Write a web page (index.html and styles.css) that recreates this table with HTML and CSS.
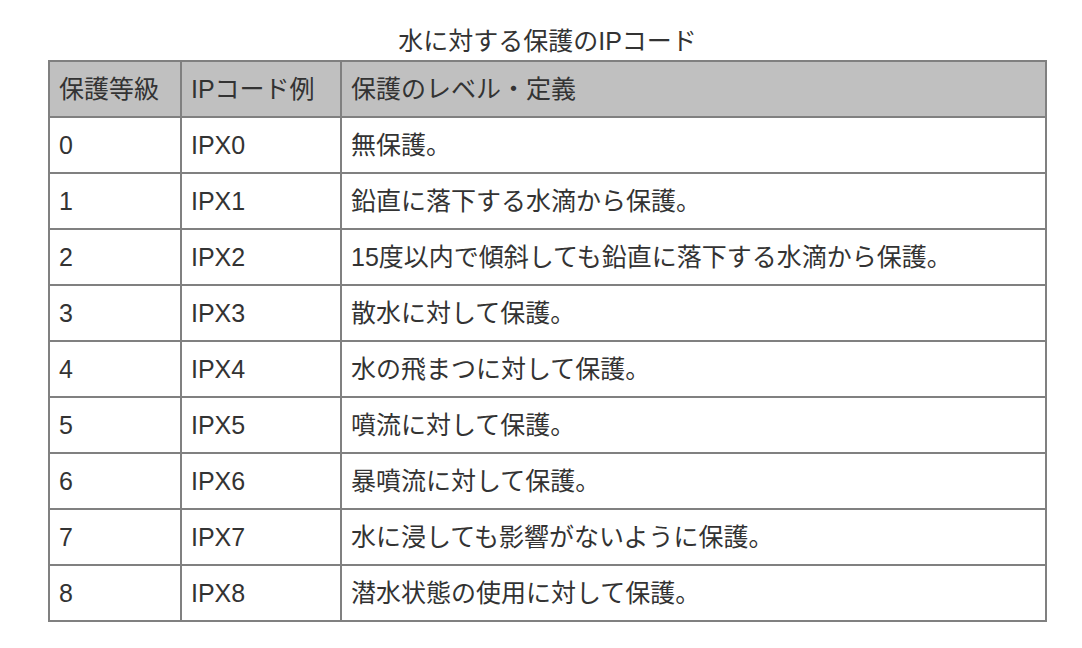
FILE: index.html
```html
<!DOCTYPE html>
<html lang="ja">
<head>
<meta charset="utf-8">
<title>水に対する保護のIPコード</title>
<link rel="stylesheet" href="styles.css">
</head>
<body>
<table class="ip-table">
  <caption class="ip-caption">水に対する保護のIPコード</caption>
  <thead>
    <tr>
      <th class="col-grade">保護等級</th>
      <th class="col-code">IPコード例</th>
      <th class="col-def">保護のレベル・定義</th>
    </tr>
  </thead>
  <tbody>
    <tr><td>0</td><td>IPX0</td><td>無保護。</td></tr>
    <tr><td>1</td><td>IPX1</td><td>鉛直に落下する水滴から保護。</td></tr>
    <tr><td>2</td><td>IPX2</td><td>15度以内で傾斜しても鉛直に落下する水滴から保護。</td></tr>
    <tr><td>3</td><td>IPX3</td><td>散水に対して保護。</td></tr>
    <tr><td>4</td><td>IPX4</td><td>水の飛まつに対して保護。</td></tr>
    <tr><td>5</td><td>IPX5</td><td>噴流に対して保護。</td></tr>
    <tr><td>6</td><td>IPX6</td><td>暴噴流に対して保護。</td></tr>
    <tr><td>7</td><td>IPX7</td><td>水に浸しても影響がないように保護。</td></tr>
    <tr><td>8</td><td>IPX8</td><td>潜水状態の使用に対して保護。</td></tr>
  </tbody>
</table>
</body>
</html>
```
FILE: styles.css
```css
html, body {
  margin: 0;
  padding: 0;
  background: #ffffff;
}
body {
  font-family: "Liberation Sans", "Noto Sans CJK JP", sans-serif;
  color: #333333;
  font-size: 25px;
}
.ip-table {
  margin: 25px 0 0 48px;
  width: 999px;
  border-collapse: collapse;
  table-layout: fixed;
}
.ip-caption {
  font-size: 25px;
  line-height: 32px;
  padding-bottom: 3px;
  text-align: center;
  font-weight: normal;
}
.ip-table th,
.ip-table td {
  border: 2px solid #808080;
  height: 56px;
  padding: 0 9px;
  box-sizing: border-box;
  text-align: left;
  vertical-align: middle;
  font-weight: normal;
  line-height: 28px;
  white-space: nowrap;
}
.ip-table th {
  background: #c0c0c0;
}
.col-grade { width: 132px; }
.col-code { width: 160px; }
```
